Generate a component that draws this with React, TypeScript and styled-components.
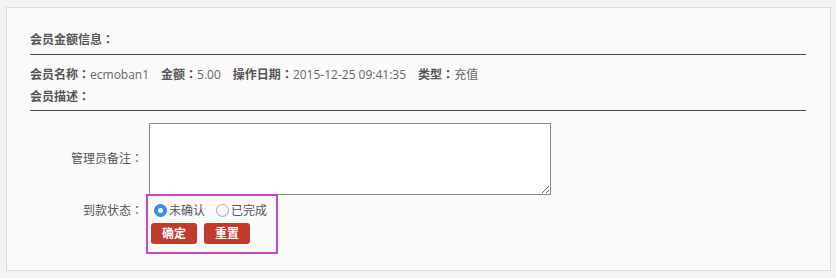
import React from "react";
import styled, { createGlobalStyle } from "styled-components";

const Global = createGlobalStyle`
  html, body { margin: 0; padding: 0; background: #f3f3f3; }
  body { font-family: "Open Sans", "Noto Sans CJK SC", sans-serif; font-size: 12px; color: #666; }
  * { box-sizing: border-box; }
`;

const Page = styled.div`
  padding: 7px 5px 7px 6px;
`;

const Panel = styled.div`
  width: 825px;
  height: 264px;
  background: #fafafa;
  border: 1px solid #dcdcdc;
  padding: 22px 24px 0 23px;
`;

const Colon = styled.span`
  font-family: "Noto Sans CJK TC", "Noto Sans CJK SC", sans-serif;
  line-height: 1;
`;

const Heading = styled.div`
  font-weight: bold;
  color: #555;
  line-height: 20px;
  padding-bottom: 4px;
  border-bottom: 1px solid #444;
`;

const Info = styled.div`
  padding: 9px 0 2px;
  border-bottom: 1px solid #444;
`;

const InfoLine = styled.div`
  display: flex;
  line-height: 22px;
`;

const Item = styled.span`
  margin-right: 12px;
  white-space: nowrap;
`;

const Key = styled.b`
  color: #555;
  font-weight: bold;
`;

const Form = styled.div`
  padding-top: 12px;
  display: grid;
  grid-template-columns: 116px auto;
  justify-content: start;
`;

const Label = styled.div<{ $top?: boolean }>`
  text-align: right;
  padding-right: 3px;
  color: #555;
  line-height: 20px;
  align-self: ${(p) => (p.$top ? "start" : "center")};
  margin-top: ${(p) => (p.$top ? "6px" : "0")};
`;

const Textarea = styled.textarea`
  margin: 0 0 0 3px;
  width: 402px;
  height: 72px;
  border: 1px solid #888;
  background: #fff;
  display: block;
  font: inherit;
`;

const Highlight = styled.div`
  justify-self: start;
  margin-top: -1px;
  border: 2px solid #cc44cc;
  padding: 4px 9px 8px 3px;
`;

const Radios = styled.div`
  display: flex;
  align-items: center;
  height: 20px;
  color: #555;
`;

const Option = styled.label`
  display: flex;
  align-items: center;
  margin-right: 8px;
  &:last-child { margin-right: 0; }
`;

const Radio = styled.span<{ $on?: boolean }>`
  width: 13px;
  height: 13px;
  border-radius: 50%;
  margin: 0 2px 0 3px;
  position: relative;
  background: ${(p) => (p.$on ? "#3a8ff4" : "linear-gradient(#fff, #f2f2f2)")};
  border: 1px solid ${(p) => (p.$on ? "#2f7fe6" : "#a6a6a6")};
  &::after {
    content: "";
    display: ${(p) => (p.$on ? "block" : "none")};
    position: absolute;
    left: 50%;
    top: 50%;
    width: 5px;
    height: 5px;
    margin: -2.5px 0 0 -2.5px;
    border-radius: 50%;
    background: #fff;
  }
`;

const Buttons = styled.div`
  display: flex;
  gap: 7px;
  margin-top: 3px;
`;

const Button = styled.button`
  width: 46px;
  height: 21px;
  padding: 0;
  border: none;
  border-radius: 3px;
  background: #c23a2b;
  color: #fff;
  font: bold 12px "Open Sans", "Noto Sans CJK SC", sans-serif;
  line-height: 21px;
`;

export default function App() {
  return (
    <>
      <Global />
      <Page>
        <Panel>
          <Heading>会员金额信息<Colon>：</Colon></Heading>
          <Info>
            <InfoLine>
              <Item><Key>会员名称<Colon>：</Colon></Key>ecmoban1</Item>
              <Item><Key>金额<Colon>：</Colon></Key>5.00</Item>
              <Item><Key>操作日期<Colon>：</Colon></Key>2015-12-25 09:41:35</Item>
              <Item><Key>类型<Colon>：</Colon></Key>充值</Item>
            </InfoLine>
            <InfoLine>
              <Item><Key>会员描述<Colon>：</Colon></Key></Item>
            </InfoLine>
          </Info>
          <Form>
            <Label>管理员备注<Colon>：</Colon></Label>
            <Textarea />
            <Label $top>到款状态<Colon>：</Colon></Label>
            <Highlight>
              <Radios>
                <Option><Radio $on />未确认</Option>
                <Option><Radio />已完成</Option>
              </Radios>
              <Buttons>
                <Button>确定</Button>
                <Button>重置</Button>
              </Buttons>
            </Highlight>
          </Form>
        </Panel>
      </Page>
    </>
  );
}
